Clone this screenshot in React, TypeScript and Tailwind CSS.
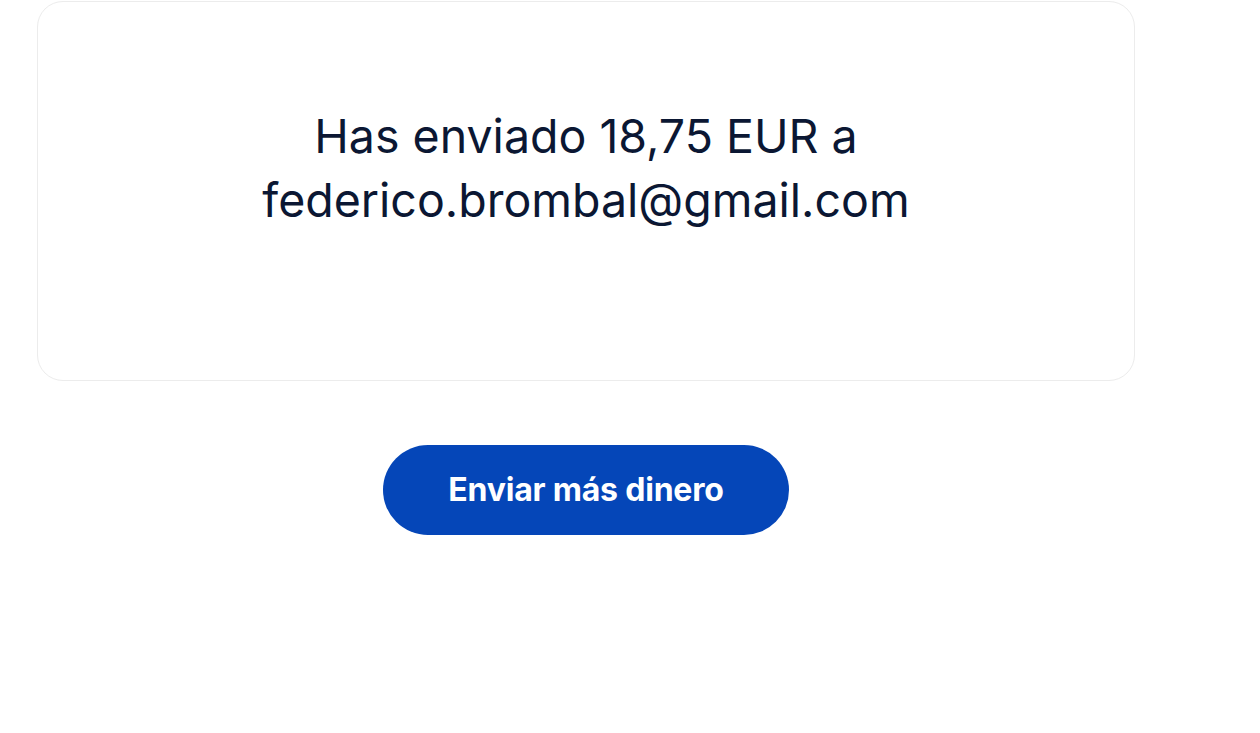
export default function App() {
  return (
    <div className="min-h-screen bg-white font-['Inter',sans-serif] text-[#0b1733]">
      <div className="ml-[37px] w-[1098px] pt-px flex flex-col items-center">
        <div className="w-full rounded-[26px] border-[1.5px] border-[#ececec] pt-[102px] pb-[148px] px-16 flex justify-center">
          <p className="max-w-[760px] text-center text-[46.5px] leading-[64px] font-normal">
            Has enviado 18,75 EUR a federico.brombal@gmail.com
          </p>
        </div>
        <button className="mt-[64px] w-[406px] h-[90px] rounded-full bg-[#0546b8] text-white text-[32px] font-bold tracking-[-0.2px]">
          Enviar más dinero
        </button>
      </div>
    </div>
  );
}
